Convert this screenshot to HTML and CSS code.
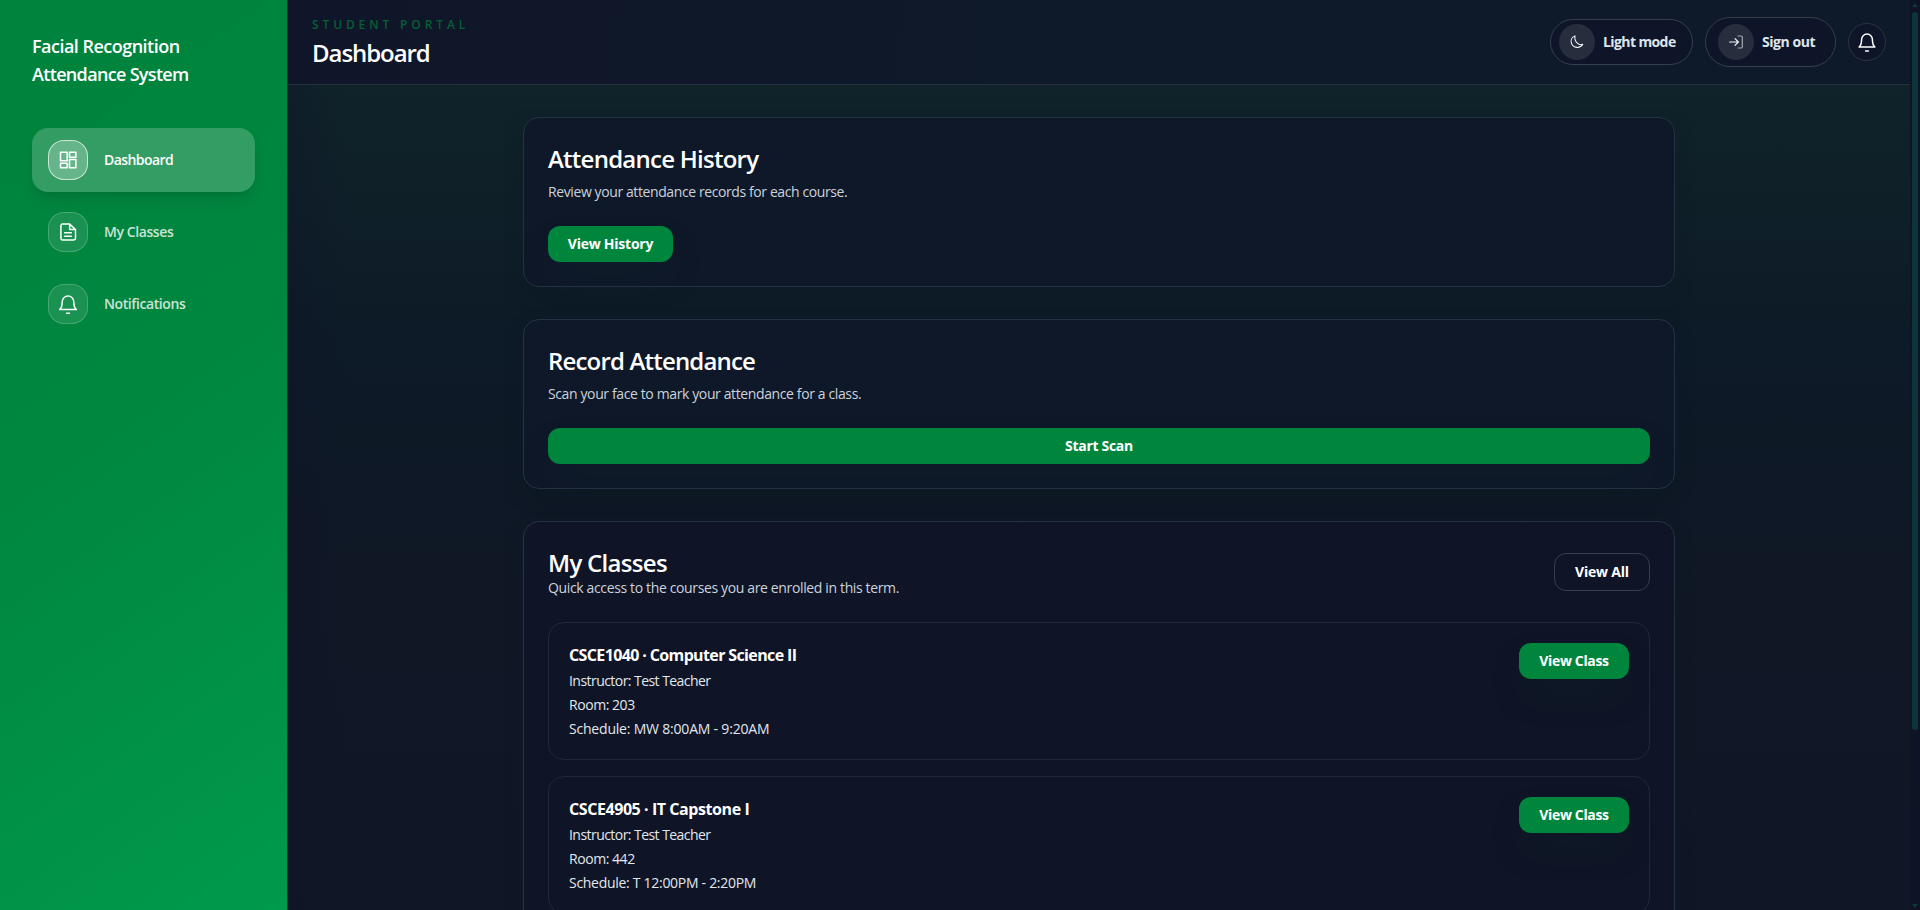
FILE: index.html
```html
<!DOCTYPE html>
<html lang="en">
<head>
<meta charset="utf-8">
<title>Dashboard</title>
<link rel="stylesheet" href="styles.css">
</head>
<body>
<div class="app">
  <aside class="sidebar">
    <div class="brand"><span class="brand-a">Facial Recognition</span><br><span class="brand-b">Attendance System</span></div>
    <nav class="nav">
      <a class="nav-item active"><span class="nav-icon"><svg width="20" height="20" viewBox="0 0 24 24"><path d="M3 2.800h8v10.200H3zM13.800 2.800H21.500v5.800h-7.700zM13.800 11.500H21.500v9.700h-7.700zM3 15.800h8v5.400H3z"/></svg></span><span class="t-dash">Dashboard</span></a>
      <a class="nav-item"><span class="nav-icon"><svg width="20" height="20" viewBox="0 0 24 24"><path d="M5.500 2.500H14l7 6.500v10.500a2 2 0 0 1-2 2H5.500a2 2 0 0 1-2-2v-15a2 2 0 0 1 2-2zM14 2.500V9h7M8 13h8M8 17h8"/></svg></span><span class="t-my">My Classes</span></a>
      <a class="nav-item"><span class="nav-icon"><svg width="20" height="20" viewBox="0 0 24 24"><path d="M2 18.500h20c-2-1.500-3-3-3-9a7 7 0 0 0-14 0c0 6-1 7.500-3 9zM10.300 23.200h3.400"/></svg></span><span class="t-not">Notifications</span></a>
    </nav>
  </aside>
  <div class="page">
    <header class="topbar">
      <div>
        <p class="eyebrow">STUDENT PORTAL</p>
        <h1>Dashboard</h1>
      </div>
      <div class="actions">
        <button class="pill light"><span class="disc"><svg width="14" height="14" viewBox="0 0 24 24"><path d="M8.500 1.500C2 4 1 10 2.500 14.500c3 8.500 15 9 19.500 1.500-7 2.500-15-4-13.500-14.500z"/></svg></span><span class="t-light">Light mode</span></button>
        <button class="pill sign"><span class="disc"><svg width="16" height="16" viewBox="0 0 24 24"><path d="M2.500 12h12M10.500 7l5 5-5 5"/><path class="dim" d="M15 3h4.500a2 2 0 0 1 2 2v14a2 2 0 0 1-2 2H15"/></svg></span><span class="t-sign">Sign out</span></button>
        <button class="bell"><svg width="20" height="20" viewBox="0 0 24 24"><path d="M2.500 18h19c-2-1.500-3-3-3-9a6.500 6.500 0 0 0-13 0c0 6-1 7.500-3 9zM10.300 22.800h3.400"/></svg></button>
      </div>
    </header>
    <main class="content">
      <section class="card">
        <h2 class="t-h1">Attendance History</h2>
        <p class="sub t-s1">Review your attendance records for each course.</p>
        <button class="btn history"><span>View History</span></button>
      </section>
      <section class="card">
        <h2 class="t-h2">Record Attendance</h2>
        <p class="sub t-s2">Scan your face to mark your attendance for a class.</p>
        <button class="btn wide"><span>Start Scan</span></button>
      </section>
      <section class="card classes">
        <div class="card-head">
          <div>
            <h2 class="t-h3">My Classes</h2>
            <p class="sub t-s3">Quick access to the courses you are enrolled in this term.</p>
          </div>
          <button class="outline">View All</button>
        </div>
        <article class="course">
          <div>
            <h3>CSCE1040 · Computer Science II</h3>
            <p class="t-ins">Instructor: Test Teacher</p>
            <p class="t-room">Room: 203</p>
            <p class="t-sch">Schedule: MW 8:00AM - 9:20AM</p>
          </div>
          <button class="btn view">View Class</button>
        </article>
        <article class="course">
          <div>
            <h3 class="t-cap">CSCE4905 · IT Capstone I</h3>
            <p class="t-ins">Instructor: Test Teacher</p>
            <p class="t-room">Room: 442</p>
            <p class="t-sch2">Schedule: T 12:00PM - 2:20PM</p>
          </div>
          <button class="btn view">View Class</button>
        </article>
      </section>
    </main>
  </div>
  <div class="scrollbar"><i class="up"></i><i class="thumb"></i><i class="down"></i></div>
</div>
</body>
</html>
```
FILE: styles.css
```css
* { box-sizing: border-box; margin: 0; padding: 0; }
body { height: 910px; overflow: hidden; background: #101628; color: #fff; font-family: "Open Sans", "Noto Sans", sans-serif; font-size: 14px; line-height: 20px; }
button { font: inherit; color: inherit; border: 0; background: none; }
svg { fill: none; stroke: currentColor; stroke-width: 1.8; stroke-linecap: round; stroke-linejoin: round; display: block; overflow: visible; }
span, h1, h2, h3, p { white-space: nowrap; }

.app { display: flex; height: 910px; overflow: hidden; }
.sidebar { width: 288px; flex: none; padding: 32px; border-right: 1px solid #1b3035; background: linear-gradient(145deg, #00833c 0%, #00873f 45%, #009a4c 100%); background-clip: padding-box; }
.brand { font-size: 18px; line-height: 28px; font-weight: 600; letter-spacing: -0.52px; }
.brand-b { letter-spacing: -0.67px; }
.nav { display: flex; flex-direction: column; gap: 8px; margin-top: 40px; }
.nav-item { display: flex; align-items: center; gap: 16px; height: 64px; padding: 0 16px; border-radius: 16px; font-weight: 600; color: rgba(255,255,255,.8); letter-spacing: -0.41px; }
.nav-item.active { background: rgba(255,255,255,.2); color: #fff; box-shadow: 0 10px 15px -3px rgba(0,0,0,.1), 0 4px 6px -4px rgba(0,0,0,.1); }
.nav-icon { display: grid; place-items: center; width: 40px; height: 40px; border-radius: 16px; border: 1px solid rgba(255,255,255,.2); background: rgba(255,255,255,.1); color: #fff; }
.active .nav-icon { background: rgba(255,255,255,.25); border-color: rgba(255,255,255,.65); }
.t-dash { letter-spacing: -0.56px; }

.page { flex: 1; min-width: 0; background: linear-gradient(90deg, rgba(15,20,42,.35), rgba(15,20,42,0) 60px), linear-gradient(180deg, #0f2329 85px, #0f1f28 210px, #0d1a27 340px, #101725 600px, #101625 910px); }
.topbar { display: flex; justify-content: space-between; align-items: center; height: 85px; padding: 0 24px; border-bottom: 1px solid #263040; background: linear-gradient(100deg, #101629, #0e1a2a 60%); }
.eyebrow { font-size: 12px; line-height: 16px; font-weight: 600; letter-spacing: 3.88px; color: #055f34; margin-top: 1px; }
h1 { font-size: 24px; line-height: 32px; font-weight: 600; letter-spacing: -1.06px; margin-top: 4px; }
.actions { display: flex; align-items: center; gap: 12px; color: #dfe5ec; font-weight: 700; }
.pill { display: flex; align-items: center; gap: 8px; border: 1px solid #363e4c; border-radius: 99px; background: #0e1528; }
.light { width: 143px; height: 46px; padding-left: 8px; letter-spacing: -0.6px; }
.sign { width: 131px; height: 50px; padding-left: 12px; letter-spacing: -0.45px; }
.disc { display: grid; place-items: center; width: 36px; height: 36px; border-radius: 50%; background: #262d3d; color: #f5f7fa; }
.dim { opacity: .6; }
.bell { display: grid; place-items: center; width: 38px; height: 38px; border: 1px solid #2b3342; border-radius: 50%; background: #0e1528; color: #fff; }

.content { width: 1152px; margin: 32px auto 0; display: flex; flex-direction: column; gap: 32px; }
.card { padding: 24px; border: 1px solid #243243; border-radius: 16px; background: #0f1829; box-shadow: 0 8px 16px rgba(13,27,36,.5); }
.classes { background: #0f1527; }
h2 { font-size: 24px; line-height: 34px; margin-bottom: -2px; font-weight: 600; letter-spacing: -0.75px; }
.t-h2 { letter-spacing: -0.82px; }
.t-h3 { letter-spacing: -0.7px; }
.sub { margin-top: 8px; color: #cbd3dd; letter-spacing: -0.4px; }
.t-s2 { letter-spacing: -0.38px; }
.t-s3 { letter-spacing: -0.36px; }
.btn { display: block; height: 36px; border-radius: 12px; background: #00853d; font-weight: 700; text-align: center; letter-spacing: -0.25px; box-shadow: 0 18px 35px -12px rgba(10,46,42,.5); }
.card > .btn { margin-top: 24px; }
.history { width: 125px; }
.wide { width: 100%; letter-spacing: -0.3px; }
.view { width: 110px; letter-spacing: -0.35px; }
.card-head { display: flex; justify-content: space-between; align-items: center; }
.card-head .sub { margin-top: 0; }
.outline { width: 96px; height: 38px; border: 1px solid #373e4e; border-radius: 12px; font-weight: 700; letter-spacing: -0.2px; }
.course { display: flex; justify-content: space-between; align-items: flex-start; margin-top: 24px; padding: 20px; border: 1px solid #1e2a3b; border-radius: 16px; background: #0f1526; }
.course + .course { margin-top: 16px; }
h3 { font-size: 16px; line-height: 24px; font-weight: 700; letter-spacing: -0.63px; }
.t-cap { letter-spacing: -0.43px; }
.course p { margin-top: 4px; color: #e2e7ee; letter-spacing: -0.2px; }
.course .t-ins { letter-spacing: -0.55px; }
.course .t-room { letter-spacing: -0.45px; }
.course .t-sch2 { letter-spacing: -0.29px; }

.scrollbar { width: 10px; flex: none; display: flex; flex-direction: column; align-items: center; background: #0e1426; }
.up, .down { width: 0; height: 0; border: 3px solid transparent; }
.up { border-top: 0; border-bottom: 4px solid #0d3a3c; margin-top: 3px; }
.thumb { width: 6px; height: 718px; margin-top: 5px; border-radius: 3px; background: #0c353b; }
.down { border-bottom: 0; border-top: 4px solid #0d3a3c; margin-top: auto; margin-bottom: 2px; }
```
